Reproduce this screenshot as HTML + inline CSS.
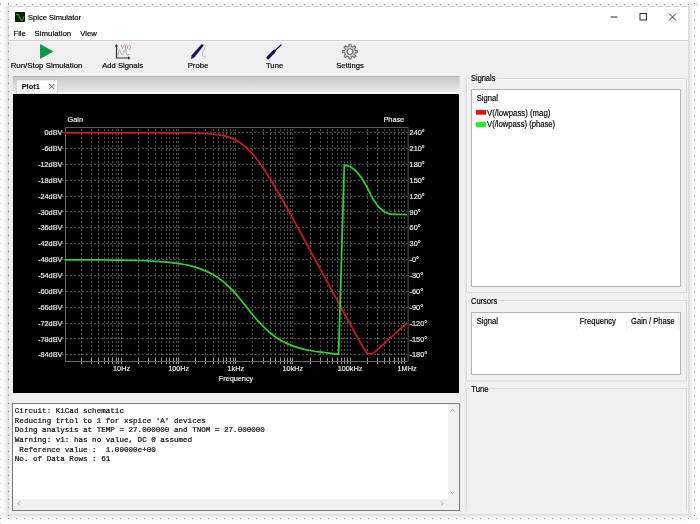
<!DOCTYPE html>
<html><head><meta charset="utf-8"><style>
html,body{margin:0;padding:0;width:700px;height:524px;overflow:hidden;background:#fff}
svg{display:block;will-change:transform}
text{font-family:"Liberation Sans",sans-serif;white-space:pre}
</style></head><body>
<svg width="700" height="524" viewBox="0 0 700 524">
<rect x="0" y="0" width="700" height="524" fill="#fff"/>
<rect x="1.5" y="1.0" width="694" height="520.5" rx="7" fill="#000" opacity="0.008"/>
<rect x="2.5" y="2.0" width="692" height="518.5" rx="6" fill="#000" opacity="0.01"/>
<rect x="3.5" y="3.0" width="690" height="516.5" rx="5" fill="#000" opacity="0.012"/>
<rect x="4.5" y="4.0" width="688" height="514.5" rx="4" fill="#000" opacity="0.015"/>
<rect x="5.5" y="5.0" width="686" height="512.5" rx="3" fill="#000" opacity="0.018"/>
<rect x="6.5" y="6.0" width="684" height="510.5" rx="2" fill="#000" opacity="0.022"/>
<rect x="7.5" y="7.0" width="682" height="508.5" rx="1" fill="#000" opacity="0.03"/>
<rect x="8" y="6" width="681" height="508" fill="#dcdcdc"/>
<rect x="9" y="7" width="679" height="507" fill="#f0f0f0"/>
<rect x="9" y="7" width="679" height="33" fill="#fff"/>
<rect x="9" y="40" width="679" height="1" fill="#cfcfcf"/>
<rect x="15" y="12" width="10" height="10" rx="1" fill="#082408"/>
<rect x="15.5" y="12.5" width="9" height="9" rx="1" fill="none" stroke="#041004" stroke-width="1"/>
<path d="M16.3 15.2 C17.6 12.8 19 15.5 20.3 18.5 S22.8 21.5 24 16.2" fill="none" stroke="#2c9c2c" stroke-width="1.1"/>
<text x="27.95" y="19.9" font-size="7.7" fill="#000" font-weight="normal" textLength="53.10" lengthAdjust="spacingAndGlyphs" stroke="#000" stroke-width="0.18">Spice Simulator</text>
<text x="13.55" y="35.9" font-size="8.0" fill="#000" font-weight="normal" textLength="12.20" lengthAdjust="spacingAndGlyphs" stroke="#000" stroke-width="0.18">File</text>
<text x="34.55" y="35.9" font-size="8.0" fill="#000" font-weight="normal" textLength="36.60" lengthAdjust="spacingAndGlyphs" stroke="#000" stroke-width="0.18">Simulation</text>
<text x="80.25" y="35.9" font-size="8.0" fill="#000" font-weight="normal" textLength="16.50" lengthAdjust="spacingAndGlyphs" stroke="#000" stroke-width="0.18">View</text>
<rect x="610.5" y="16.5" width="7" height="1" fill="#333"/>
<rect x="640" y="13.5" width="6.5" height="6.5" fill="none" stroke="#333" stroke-width="1"/>
<path d="M669 13.5 L676 20.5 M676 13.5 L669 20.5" stroke="#333" stroke-width="1" fill="none"/>
<rect x="9" y="41" width="679" height="1" fill="#fafafa"/>
<path d="M40 44 L53.5 51.5 L40 59 Z" fill="#0f9a48"/>
<text x="10.65" y="68.4" font-size="8.0" fill="#000" font-weight="normal" textLength="71.80" lengthAdjust="spacingAndGlyphs" stroke="#000" stroke-width="0.18">Run/Stop Simulation</text>
<path d="M116.5 45 V58 H129.5" fill="none" stroke="#333" stroke-width="1.2"/>
<path d="M114.8 46.5 L116.5 44 L118.2 46.5 Z M128 56.3 L130.5 58 L128 59.7 Z" fill="#333"/>
<path d="M118 55.5 C119 49 119.8 49 120.8 52.5 S122.6 56 123.6 52.5 S125.4 49 126.4 52.5 S128 56 128.6 54" fill="none" stroke="#8a8a8a" stroke-width="0.75"/>
<text x="120.2" y="49.3" font-size="5.8" fill="#e04a5a" textLength="10.6" lengthAdjust="spacingAndGlyphs" style="font-family:&quot;Liberation Serif&quot;,serif">V(t)</text>
<text x="102.25" y="68.4" font-size="8.0" fill="#000" font-weight="normal" textLength="40.80" lengthAdjust="spacingAndGlyphs" stroke="#000" stroke-width="0.18">Add Signals</text>
<path d="M202.5 45.5 C205.5 43.5 206 46 204 50 C202 54 201 56 206 57" fill="none" stroke="#9a9ab0" stroke-width="0.7"/>
<path d="M191.1 58.8 L191.9 55.3 L201.4 44.6 Q203 44 203.2 45.9 L194.3 57.3 Z" fill="#1a1060" stroke="#1a1060" stroke-width="0.4" stroke-linejoin="round"/>
<text x="187.65" y="68.4" font-size="8.0" fill="#000" font-weight="normal" textLength="20.70" lengthAdjust="spacingAndGlyphs" stroke="#000" stroke-width="0.18">Probe</text>
<path d="M281 45 L273.8 51.7" stroke="#1a1060" stroke-width="1.3" stroke-linecap="round" fill="none"/>
<path d="M274.2 51.3 L268 57.7" stroke="#1a1060" stroke-width="3.2" stroke-linecap="round" fill="none"/>
<text x="265.95" y="68.4" font-size="8.0" fill="#000" font-weight="normal" textLength="17.30" lengthAdjust="spacingAndGlyphs" stroke="#000" stroke-width="0.18">Tune</text>
<path d="M347.97 46.70 L348.75 46.45 L349.04 44.26 L350.96 44.26 L351.25 46.45 L352.03 46.70 L352.76 47.08 L354.51 45.74 L355.86 47.09 L354.52 48.84 L354.90 49.57 L355.15 50.35 L357.34 50.64 L357.34 52.56 L355.15 52.85 L354.90 53.63 L354.52 54.36 L355.86 56.11 L354.51 57.46 L352.76 56.12 L352.03 56.50 L351.25 56.75 L350.96 58.94 L349.04 58.94 L348.75 56.75 L347.97 56.50 L347.24 56.12 L345.49 57.46 L344.14 56.11 L345.48 54.36 L345.10 53.63 L344.85 52.85 L342.66 52.56 L342.66 50.64 L344.85 50.35 L345.10 49.57 L345.48 48.84 L344.14 47.09 L345.49 45.74 L347.24 47.08 Z" fill="#d6d6d6" stroke="#6b6b6b" stroke-width="1.1" stroke-linejoin="round"/>
<circle cx="350" cy="51.6" r="2.9" fill="#f4f4f4" stroke="#6b6b6b" stroke-width="1.1"/>
<text x="336.25" y="68.4" font-size="8.0" fill="#000" font-weight="normal" textLength="27.50" lengthAdjust="spacingAndGlyphs" stroke="#000" stroke-width="0.18">Settings</text>
<defs><linearGradient id="tabstrip" x1="0" y1="0" x2="0" y2="1"><stop offset="0" stop-color="#c6c6c6"/><stop offset="1" stop-color="#ececec"/></linearGradient><linearGradient id="tab" x1="0" y1="0" x2="0" y2="1"><stop offset="0" stop-color="#ffffff"/><stop offset="1" stop-color="#f4f4f4"/></linearGradient></defs>
<rect x="12.5" y="76" width="447" height="18" fill="url(#tabstrip)"/>
<rect x="12.5" y="76" width="447" height="1" fill="#b4b4b4"/>
<rect x="12.5" y="92" width="447" height="2" fill="#f6f6f6"/>
<rect x="16.5" y="80" width="41" height="14" fill="url(#tab)" stroke="#c4c4c4" stroke-width="0.6"/>
<text x="21.65" y="88.7" font-size="7.6" fill="#111" font-weight="bold" textLength="18.20" lengthAdjust="spacingAndGlyphs" stroke="#111" stroke-width="0.1">Plot1</text>
<path d="M49.3 84 L54.3 89 M54.3 84 L49.3 89" stroke="#444" stroke-width="0.9" fill="none"/>
<rect x="13" y="94" width="446" height="299" fill="#000"/>
<path d="M81.5 129 V361 M91.5 129 V361 M98.5 129 V361 M104.5 129 V361 M108.5 129 V361 M112.5 129 V361 M116.5 129 V361 M118.5 129 V361 M121.5 129 V361 M138.5 129 V361 M148.5 129 V361 M155.5 129 V361 M161.5 129 V361 M166.5 129 V361 M169.5 129 V361 M173.5 129 V361 M176.5 129 V361 M178.5 129 V361 M195.5 129 V361 M205.5 129 V361 M213.5 129 V361 M218.5 129 V361 M223.5 129 V361 M226.5 129 V361 M230.5 129 V361 M233.5 129 V361 M235.5 129 V361 M252.5 129 V361 M263.5 129 V361 M270.5 129 V361 M275.5 129 V361 M280.5 129 V361 M284.5 129 V361 M287.5 129 V361 M290.5 129 V361 M292.5 129 V361 M310.5 129 V361 M320.5 129 V361 M327.5 129 V361 M332.5 129 V361 M337.5 129 V361 M341.5 129 V361 M344.5 129 V361 M347.5 129 V361 M350.5 129 V361 M367.5 129 V361 M377.5 129 V361 M384.5 129 V361 M389.5 129 V361 M394.5 129 V361 M398.5 129 V361 M401.5 129 V361 M404.5 129 V361" stroke="#505050" stroke-width="1" stroke-dasharray="2 2" fill="none"/>
<path d="M62 132.5 H407.6 M62 148.5 H407.6 M62 164.5 H407.6 M62 180.5 H407.6 M62 196.5 H407.6 M62 211.5 H407.6 M62 227.5 H407.6 M62 243.5 H407.6 M62 259.5 H407.6 M62 275.5 H407.6 M62 291.5 H407.6 M62 307.5 H407.6 M62 323.5 H407.6 M62 338.5 H407.6 M62 354.5 H407.6" stroke="#4c4c4c" stroke-width="1" stroke-dasharray="2 2" fill="none"/>
<path d="M81.5 358 V364 M91.5 358 V364 M98.5 358 V364 M104.5 358 V364 M108.5 358 V364 M112.5 358 V364 M116.5 358 V364 M118.5 358 V364 M121.5 358 V364 M138.5 358 V364 M148.5 358 V364 M155.5 358 V364 M161.5 358 V364 M166.5 358 V364 M169.5 358 V364 M173.5 358 V364 M176.5 358 V364 M178.5 358 V364 M195.5 358 V364 M205.5 358 V364 M213.5 358 V364 M218.5 358 V364 M223.5 358 V364 M226.5 358 V364 M230.5 358 V364 M233.5 358 V364 M235.5 358 V364 M252.5 358 V364 M263.5 358 V364 M270.5 358 V364 M275.5 358 V364 M280.5 358 V364 M284.5 358 V364 M287.5 358 V364 M290.5 358 V364 M292.5 358 V364 M310.5 358 V364 M320.5 358 V364 M327.5 358 V364 M332.5 358 V364 M337.5 358 V364 M341.5 358 V364 M344.5 358 V364 M347.5 358 V364 M350.5 358 V364 M367.5 358 V364 M377.5 358 V364 M384.5 358 V364 M389.5 358 V364 M394.5 358 V364 M398.5 358 V364 M401.5 358 V364 M404.5 358 V364" stroke="#9a9a9a" stroke-width="1" fill="none"/>
<path d="M65.5 127 V361.5 H407.6" stroke="#6a6a6a" stroke-width="1" fill="none"/>
<path d="M65 127.5 H408.1 V361.5" stroke="#5a5a5a" stroke-width="1" fill="none"/>
<text x="62.4" y="135.2" font-size="7.3" fill="#e6e6e6" text-anchor="end" font-weight="normal" stroke="#e6e6e6" stroke-width="0.2" >0dBV</text>
<text x="409.6" y="135.1" font-size="7.3" fill="#e6e6e6" text-anchor="start" font-weight="normal" stroke="#e6e6e6" stroke-width="0.2" >240°</text>
<text x="62.4" y="151.1" font-size="7.3" fill="#e6e6e6" text-anchor="end" font-weight="normal" stroke="#e6e6e6" stroke-width="0.2" >-6dBV</text>
<text x="409.6" y="151.0" font-size="7.3" fill="#e6e6e6" text-anchor="start" font-weight="normal" stroke="#e6e6e6" stroke-width="0.2" >210°</text>
<text x="62.4" y="166.9" font-size="7.3" fill="#e6e6e6" text-anchor="end" font-weight="normal" stroke="#e6e6e6" stroke-width="0.2" >-12dBV</text>
<text x="409.6" y="166.8" font-size="7.3" fill="#e6e6e6" text-anchor="start" font-weight="normal" stroke="#e6e6e6" stroke-width="0.2" >180°</text>
<text x="62.4" y="182.8" font-size="7.3" fill="#e6e6e6" text-anchor="end" font-weight="normal" stroke="#e6e6e6" stroke-width="0.2" >-18dBV</text>
<text x="409.6" y="182.7" font-size="7.3" fill="#e6e6e6" text-anchor="start" font-weight="normal" stroke="#e6e6e6" stroke-width="0.2" >150°</text>
<text x="62.4" y="198.7" font-size="7.3" fill="#e6e6e6" text-anchor="end" font-weight="normal" stroke="#e6e6e6" stroke-width="0.2" >-24dBV</text>
<text x="409.6" y="198.6" font-size="7.3" fill="#e6e6e6" text-anchor="start" font-weight="normal" stroke="#e6e6e6" stroke-width="0.2" >120°</text>
<text x="62.4" y="214.6" font-size="7.3" fill="#e6e6e6" text-anchor="end" font-weight="normal" stroke="#e6e6e6" stroke-width="0.2" >-30dBV</text>
<text x="409.6" y="214.5" font-size="7.3" fill="#e6e6e6" text-anchor="start" font-weight="normal" stroke="#e6e6e6" stroke-width="0.2" >90°</text>
<text x="62.4" y="230.4" font-size="7.3" fill="#e6e6e6" text-anchor="end" font-weight="normal" stroke="#e6e6e6" stroke-width="0.2" >-36dBV</text>
<text x="409.6" y="230.3" font-size="7.3" fill="#e6e6e6" text-anchor="start" font-weight="normal" stroke="#e6e6e6" stroke-width="0.2" >60°</text>
<text x="62.4" y="246.3" font-size="7.3" fill="#e6e6e6" text-anchor="end" font-weight="normal" stroke="#e6e6e6" stroke-width="0.2" >-42dBV</text>
<text x="409.6" y="246.2" font-size="7.3" fill="#e6e6e6" text-anchor="start" font-weight="normal" stroke="#e6e6e6" stroke-width="0.2" >30°</text>
<text x="62.4" y="262.2" font-size="7.3" fill="#e6e6e6" text-anchor="end" font-weight="normal" stroke="#e6e6e6" stroke-width="0.2" >-48dBV</text>
<text x="409.6" y="262.1" font-size="7.3" fill="#e6e6e6" text-anchor="start" font-weight="normal" stroke="#e6e6e6" stroke-width="0.2" >-0°</text>
<text x="62.4" y="278.1" font-size="7.3" fill="#e6e6e6" text-anchor="end" font-weight="normal" stroke="#e6e6e6" stroke-width="0.2" >-54dBV</text>
<text x="409.6" y="278.0" font-size="7.3" fill="#e6e6e6" text-anchor="start" font-weight="normal" stroke="#e6e6e6" stroke-width="0.2" >-30°</text>
<text x="62.4" y="293.9" font-size="7.3" fill="#e6e6e6" text-anchor="end" font-weight="normal" stroke="#e6e6e6" stroke-width="0.2" >-60dBV</text>
<text x="409.6" y="293.9" font-size="7.3" fill="#e6e6e6" text-anchor="start" font-weight="normal" stroke="#e6e6e6" stroke-width="0.2" >-60°</text>
<text x="62.4" y="309.8" font-size="7.3" fill="#e6e6e6" text-anchor="end" font-weight="normal" stroke="#e6e6e6" stroke-width="0.2" >-66dBV</text>
<text x="409.6" y="309.7" font-size="7.3" fill="#e6e6e6" text-anchor="start" font-weight="normal" stroke="#e6e6e6" stroke-width="0.2" >-90°</text>
<text x="62.4" y="325.7" font-size="7.3" fill="#e6e6e6" text-anchor="end" font-weight="normal" stroke="#e6e6e6" stroke-width="0.2" >-72dBV</text>
<text x="409.6" y="325.6" font-size="7.3" fill="#e6e6e6" text-anchor="start" font-weight="normal" stroke="#e6e6e6" stroke-width="0.2" >-120°</text>
<text x="62.4" y="341.6" font-size="7.3" fill="#e6e6e6" text-anchor="end" font-weight="normal" stroke="#e6e6e6" stroke-width="0.2" >-78dBV</text>
<text x="409.6" y="341.5" font-size="7.3" fill="#e6e6e6" text-anchor="start" font-weight="normal" stroke="#e6e6e6" stroke-width="0.2" >-150°</text>
<text x="62.4" y="357.4" font-size="7.3" fill="#e6e6e6" text-anchor="end" font-weight="normal" stroke="#e6e6e6" stroke-width="0.2" >-84dBV</text>
<text x="409.6" y="357.4" font-size="7.3" fill="#e6e6e6" text-anchor="start" font-weight="normal" stroke="#e6e6e6" stroke-width="0.2" >-180°</text>
<text x="121.6" y="370.5" font-size="7.3" fill="#e6e6e6" text-anchor="middle" font-weight="normal" stroke="#e6e6e6" stroke-width="0.2" >10Hz</text>
<text x="178.7" y="370.5" font-size="7.3" fill="#e6e6e6" text-anchor="middle" font-weight="normal" stroke="#e6e6e6" stroke-width="0.2" >100Hz</text>
<text x="235.8" y="370.5" font-size="7.3" fill="#e6e6e6" text-anchor="middle" font-weight="normal" stroke="#e6e6e6" stroke-width="0.2" >1kHz</text>
<text x="292.9" y="370.5" font-size="7.3" fill="#e6e6e6" text-anchor="middle" font-weight="normal" stroke="#e6e6e6" stroke-width="0.2" >10kHz</text>
<text x="350.0" y="370.5" font-size="7.3" fill="#e6e6e6" text-anchor="middle" font-weight="normal" stroke="#e6e6e6" stroke-width="0.2" >100kHz</text>
<text x="407.1" y="370.5" font-size="7.3" fill="#e6e6e6" text-anchor="middle" font-weight="normal" stroke="#e6e6e6" stroke-width="0.2" >1MHz</text>
<text x="236" y="381.1" font-size="7.3" fill="#e6e6e6" text-anchor="middle" font-weight="normal" stroke="#e6e6e6" stroke-width="0.2" >Frequency</text>
<text x="67.6" y="122.4" font-size="7.3" fill="#e6e6e6" text-anchor="start" font-weight="normal" stroke="#e6e6e6" stroke-width="0.2" >Gain</text>
<text x="404.2" y="122.4" font-size="7.3" fill="#e6e6e6" text-anchor="end" font-weight="normal" stroke="#e6e6e6" stroke-width="0.2" >Phase</text>
<polyline points="64.5,132.8 70.2,132.8 75.9,132.8 81.6,132.8 87.3,132.8 93.0,132.8 98.8,132.8 104.5,132.8 110.2,132.8 115.9,132.8 121.6,132.8 127.3,132.8 133.0,132.8 138.7,132.8 144.4,132.8 150.2,132.8 155.9,132.8 161.6,132.8 167.3,132.8 173.0,132.9 178.7,132.9 184.4,132.9 190.1,133.0 195.8,133.1 201.5,133.3 207.2,133.6 213.0,134.1 218.7,134.8 224.4,135.9 230.1,137.6 235.8,140.1 241.5,143.6 247.2,148.3 252.9,154.3 258.6,161.5 264.4,169.7 270.1,178.7 275.8,188.2 281.5,198.1 287.2,208.3 292.9,218.6 298.6,229.0 304.3,239.5 310.0,250.0 315.7,260.5 321.4,271.1 327.2,281.6 332.9,292.2 338.6,302.8 344.3,313.5 350.0,323.7 355.7,334.1 361.4,344.5 367.1,353.7 372.8,353.7 378.6,348.6 384.3,343.5 390.0,338.4 395.7,333.2 401.4,328.1 407.1,323.0" fill="none" stroke="#c81a1a" stroke-width="1.75" stroke-linejoin="round"/>
<polyline points="64.5,259.8 70.2,259.8 75.9,259.9 81.6,259.9 87.3,259.9 93.0,259.9 98.8,259.9 104.5,260.0 110.2,260.0 115.9,260.1 121.6,260.2 127.3,260.3 133.0,260.4 138.7,260.5 144.4,260.7 150.2,261.0 155.9,261.3 161.6,261.7 167.3,262.2 173.0,262.8 178.7,263.6 184.4,264.5 190.1,265.7 195.8,267.3 201.5,269.2 207.2,271.6 213.0,274.5 218.7,278.1 224.4,282.6 230.1,287.8 235.8,293.9 241.5,300.7 247.2,307.9 252.9,315.0 258.6,321.7 264.4,327.7 270.1,332.8 275.8,337.2 281.5,340.7 287.2,343.6 292.9,345.9 298.6,347.8 304.3,349.3 310.0,350.5 315.7,351.5 321.4,352.2 327.2,352.9 332.9,353.6 338.6,354.4 344.3,165.0 350.0,166.5 355.7,170.7 361.4,177.6 367.1,187.3 372.8,198.8 378.6,207.0 384.3,211.7 390.0,214.2 395.7,214.4 401.4,214.5 407.1,214.5" fill="none" stroke="#2cd42c" stroke-width="1.75" stroke-linejoin="round"/>
<rect x="12.5" y="403.5" width="447" height="107" fill="#fff" stroke="#7c7c7c" stroke-width="1"/>
<rect x="448" y="404" width="11" height="106" fill="#f0f0f0"/>
<rect x="13" y="499" width="446" height="11" fill="#f0f0f0"/>
<path d="M450.5 411.5 L452.5 409.5 L454.5 411.5 M450.5 491.5 L452.5 493.5 L454.5 491.5 M20 501.5 L18 503.5 L20 505.5 M441 501.5 L443 503.5 L441 505.5" stroke="#9a9a9a" stroke-width="0.9" fill="none"/>
<text x="14.8" y="412.9" font-size="7.58" fill="#111" stroke="#111" stroke-width="0.22" style="font-family:&quot;Liberation Mono&quot;,monospace">Circuit:&#160;KiCad&#160;schematic</text>
<text x="14.8" y="422.6" font-size="7.58" fill="#111" stroke="#111" stroke-width="0.22" style="font-family:&quot;Liberation Mono&quot;,monospace">Reducing&#160;trtol&#160;to&#160;1&#160;for&#160;xspice&#160;&#39;A&#39;&#160;devices</text>
<text x="14.8" y="432.3" font-size="7.58" fill="#111" stroke="#111" stroke-width="0.22" style="font-family:&quot;Liberation Mono&quot;,monospace">Doing&#160;analysis&#160;at&#160;TEMP&#160;=&#160;27.000000&#160;and&#160;TNOM&#160;=&#160;27.000000</text>
<text x="14.8" y="442.0" font-size="7.58" fill="#111" stroke="#111" stroke-width="0.22" style="font-family:&quot;Liberation Mono&quot;,monospace">Warning:&#160;v1:&#160;has&#160;no&#160;value,&#160;DC&#160;0&#160;assumed</text>
<text x="14.8" y="451.7" font-size="7.58" fill="#111" stroke="#111" stroke-width="0.22" style="font-family:&quot;Liberation Mono&quot;,monospace">&#160;Reference&#160;value&#160;:&#160;&#160;1.00000e+00</text>
<text x="14.8" y="461.4" font-size="7.58" fill="#111" stroke="#111" stroke-width="0.22" style="font-family:&quot;Liberation Mono&quot;,monospace">No.&#160;of&#160;Data&#160;Rows&#160;:&#160;61</text>
<path d="M466.5 78.5 V292.5 H686.5 V78.5 H497" stroke="#dadada" stroke-width="1" fill="none"/>
<path d="M467.5 79.5 V291.5 M497 79.5 H685.5" stroke="#fbfbfb" stroke-width="1" fill="none"/>
<path d="M466.5 78.5 H469" stroke="#dadada" stroke-width="1" fill="none"/>
<text x="471.05" y="80.7" font-size="8.5" fill="#000" font-weight="normal" textLength="24.30" lengthAdjust="spacingAndGlyphs" stroke="#000" stroke-width="0.18">Signals</text>
<rect x="471.5" y="89.5" width="209" height="197" fill="#fff" stroke="#b4b4b4" stroke-width="1"/>
<text x="476.75" y="100.7" font-size="8.5" fill="#000" font-weight="normal" textLength="21.20" lengthAdjust="spacingAndGlyphs" stroke="#000" stroke-width="0.18">Signal</text>
<rect x="476" y="110" width="10" height="4.7" fill="#ee1111"/>
<rect x="476" y="122.2" width="10" height="5" fill="#22ee22"/>
<text x="487.05" y="115.7" font-size="8.5" fill="#000" font-weight="normal" textLength="63.30" lengthAdjust="spacingAndGlyphs" stroke="#000" stroke-width="0.18">V(/lowpass) (mag)</text>
<text x="487.05" y="127.0" font-size="8.5" fill="#000" font-weight="normal" textLength="68.10" lengthAdjust="spacingAndGlyphs" stroke="#000" stroke-width="0.18">V(/lowpass) (phase)</text>
<path d="M466.5 300.5 V381.0 H686.5 V300.5 H498" stroke="#dadada" stroke-width="1" fill="none"/>
<path d="M467.5 301.5 V380.0 M498 301.5 H685.5" stroke="#fbfbfb" stroke-width="1" fill="none"/>
<path d="M466.5 300.5 H469" stroke="#dadada" stroke-width="1" fill="none"/>
<text x="470.95" y="304.0" font-size="8.5" fill="#000" font-weight="normal" textLength="26.40" lengthAdjust="spacingAndGlyphs" stroke="#000" stroke-width="0.18">Cursors</text>
<rect x="471.5" y="312.5" width="209" height="62" fill="#fff" stroke="#b4b4b4" stroke-width="1"/>
<path d="M576.5 313 V330 M626.5 313 V330 M678.5 313 V330" stroke="#f0f0f0" stroke-width="1"/>
<text x="476.75" y="324.0" font-size="8.5" fill="#000" font-weight="normal" textLength="21.20" lengthAdjust="spacingAndGlyphs" stroke="#000" stroke-width="0.18">Signal</text>
<text x="579.65" y="324.0" font-size="8.5" fill="#000" font-weight="normal" textLength="36.30" lengthAdjust="spacingAndGlyphs" stroke="#000" stroke-width="0.18">Frequency</text>
<text x="631.05" y="324.0" font-size="8.5" fill="#000" font-weight="normal" textLength="43.70" lengthAdjust="spacingAndGlyphs" stroke="#000" stroke-width="0.18">Gain / Phase</text>
<path d="M466.5 511 V388.5 H469 M489 388.5 H686.5 V511" stroke="#dadada" stroke-width="1" fill="none"/>
<text x="471.25" y="391.7" font-size="8.5" fill="#000" font-weight="normal" textLength="17.30" lengthAdjust="spacingAndGlyphs" stroke="#000" stroke-width="0.18">Tune</text>
<path d="M460.5 76 V514 M465.5 76 V514" stroke="#e6e6e6" stroke-width="1"/>
<path d="M0 4.5h1 M0 518.5h1 M8 4.5h1 M8 518.5h1 M16 4.5h1 M16 518.5h1 M24 4.5h1 M24 518.5h1 M32 4.5h1 M32 518.5h1 M40 4.5h1 M40 518.5h1 M48 4.5h1 M48 518.5h1 M56 4.5h1 M56 518.5h1 M64 4.5h1 M64 518.5h1 M72 4.5h1 M72 518.5h1 M80 4.5h1 M80 518.5h1 M88 4.5h1 M88 518.5h1 M96 4.5h1 M96 518.5h1 M104 4.5h1 M104 518.5h1 M112 4.5h1 M112 518.5h1 M120 4.5h1 M120 518.5h1 M128 4.5h1 M128 518.5h1 M136 4.5h1 M136 518.5h1 M144 4.5h1 M144 518.5h1 M152 4.5h1 M152 518.5h1 M160 4.5h1 M160 518.5h1 M168 4.5h1 M168 518.5h1 M176 4.5h1 M176 518.5h1 M184 4.5h1 M184 518.5h1 M192 4.5h1 M192 518.5h1 M200 4.5h1 M200 518.5h1 M208 4.5h1 M208 518.5h1 M216 4.5h1 M216 518.5h1 M224 4.5h1 M224 518.5h1 M232 4.5h1 M232 518.5h1 M240 4.5h1 M240 518.5h1 M248 4.5h1 M248 518.5h1 M256 4.5h1 M256 518.5h1 M264 4.5h1 M264 518.5h1 M272 4.5h1 M272 518.5h1 M280 4.5h1 M280 518.5h1 M288 4.5h1 M288 518.5h1 M296 4.5h1 M296 518.5h1 M304 4.5h1 M304 518.5h1 M312 4.5h1 M312 518.5h1 M320 4.5h1 M320 518.5h1 M328 4.5h1 M328 518.5h1 M336 4.5h1 M336 518.5h1 M344 4.5h1 M344 518.5h1 M352 4.5h1 M352 518.5h1 M360 4.5h1 M360 518.5h1 M368 4.5h1 M368 518.5h1 M376 4.5h1 M376 518.5h1 M384 4.5h1 M384 518.5h1 M392 4.5h1 M392 518.5h1 M400 4.5h1 M400 518.5h1 M408 4.5h1 M408 518.5h1 M416 4.5h1 M416 518.5h1 M424 4.5h1 M424 518.5h1 M432 4.5h1 M432 518.5h1 M440 4.5h1 M440 518.5h1 M448 4.5h1 M448 518.5h1 M456 4.5h1 M456 518.5h1 M464 4.5h1 M464 518.5h1 M472 4.5h1 M472 518.5h1 M480 4.5h1 M480 518.5h1 M488 4.5h1 M488 518.5h1 M496 4.5h1 M496 518.5h1 M504 4.5h1 M504 518.5h1 M512 4.5h1 M512 518.5h1 M520 4.5h1 M520 518.5h1 M528 4.5h1 M528 518.5h1 M536 4.5h1 M536 518.5h1 M544 4.5h1 M544 518.5h1 M552 4.5h1 M552 518.5h1 M560 4.5h1 M560 518.5h1 M568 4.5h1 M568 518.5h1 M576 4.5h1 M576 518.5h1 M584 4.5h1 M584 518.5h1 M592 4.5h1 M592 518.5h1 M600 4.5h1 M600 518.5h1 M608 4.5h1 M608 518.5h1 M616 4.5h1 M616 518.5h1 M624 4.5h1 M624 518.5h1 M632 4.5h1 M632 518.5h1 M640 4.5h1 M640 518.5h1 M648 4.5h1 M648 518.5h1 M656 4.5h1 M656 518.5h1 M664 4.5h1 M664 518.5h1 M672 4.5h1 M672 518.5h1 M680 4.5h1 M680 518.5h1 M688 4.5h1 M688 518.5h1 M696 4.5h1 M696 518.5h1" stroke="#a0a0a0" stroke-width="1" fill="none"/>
<path d="M8 3.5h1 M694 3.5h1 M8 11.5h1 M694 11.5h1 M8 19.5h1 M694 19.5h1 M8 27.5h1 M694 27.5h1 M8 35.5h1 M694 35.5h1 M8 43.5h1 M694 43.5h1 M8 51.5h1 M694 51.5h1 M8 59.5h1 M694 59.5h1 M8 67.5h1 M694 67.5h1 M8 75.5h1 M694 75.5h1 M8 83.5h1 M694 83.5h1 M8 91.5h1 M694 91.5h1 M8 99.5h1 M694 99.5h1 M8 107.5h1 M694 107.5h1 M8 115.5h1 M694 115.5h1 M8 123.5h1 M694 123.5h1 M8 131.5h1 M694 131.5h1 M8 139.5h1 M694 139.5h1 M8 147.5h1 M694 147.5h1 M8 155.5h1 M694 155.5h1 M8 163.5h1 M694 163.5h1 M8 171.5h1 M694 171.5h1 M8 179.5h1 M694 179.5h1 M8 187.5h1 M694 187.5h1 M8 195.5h1 M694 195.5h1 M8 203.5h1 M694 203.5h1 M8 211.5h1 M694 211.5h1 M8 219.5h1 M694 219.5h1 M8 227.5h1 M694 227.5h1 M8 235.5h1 M694 235.5h1 M8 243.5h1 M694 243.5h1 M8 251.5h1 M694 251.5h1 M8 259.5h1 M694 259.5h1 M8 267.5h1 M694 267.5h1 M8 275.5h1 M694 275.5h1 M8 283.5h1 M694 283.5h1 M8 291.5h1 M694 291.5h1 M8 299.5h1 M694 299.5h1 M8 307.5h1 M694 307.5h1 M8 315.5h1 M694 315.5h1 M8 323.5h1 M694 323.5h1 M8 331.5h1 M694 331.5h1 M8 339.5h1 M694 339.5h1 M8 347.5h1 M694 347.5h1 M8 355.5h1 M694 355.5h1 M8 363.5h1 M694 363.5h1 M8 371.5h1 M694 371.5h1 M8 379.5h1 M694 379.5h1 M8 387.5h1 M694 387.5h1 M8 395.5h1 M694 395.5h1 M8 403.5h1 M694 403.5h1 M8 411.5h1 M694 411.5h1 M8 419.5h1 M694 419.5h1 M8 427.5h1 M694 427.5h1 M8 435.5h1 M694 435.5h1 M8 443.5h1 M694 443.5h1 M8 451.5h1 M694 451.5h1 M8 459.5h1 M694 459.5h1 M8 467.5h1 M694 467.5h1 M8 475.5h1 M694 475.5h1 M8 483.5h1 M694 483.5h1 M8 491.5h1 M694 491.5h1 M8 499.5h1 M694 499.5h1 M8 507.5h1 M694 507.5h1 M8 515.5h1 M694 515.5h1" stroke="#8c8c8c" stroke-width="1" fill="none"/>
<path d="M0 3.5h1 M0 11.5h1 M0 19.5h1 M0 27.5h1 M0 35.5h1 M0 43.5h1 M0 51.5h1 M0 59.5h1 M0 67.5h1 M0 75.5h1 M0 83.5h1 M0 91.5h1 M0 99.5h1 M0 107.5h1 M0 115.5h1 M0 123.5h1 M0 131.5h1 M0 139.5h1 M0 147.5h1 M0 155.5h1 M0 163.5h1 M0 171.5h1 M0 179.5h1 M0 187.5h1 M0 195.5h1 M0 203.5h1 M0 211.5h1 M0 219.5h1 M0 227.5h1 M0 235.5h1 M0 243.5h1 M0 251.5h1 M0 259.5h1 M0 267.5h1 M0 275.5h1 M0 283.5h1 M0 291.5h1 M0 299.5h1 M0 307.5h1 M0 315.5h1 M0 323.5h1 M0 331.5h1 M0 339.5h1 M0 347.5h1 M0 355.5h1 M0 363.5h1 M0 371.5h1 M0 379.5h1 M0 387.5h1 M0 395.5h1 M0 403.5h1 M0 411.5h1 M0 419.5h1 M0 427.5h1 M0 435.5h1 M0 443.5h1 M0 451.5h1 M0 459.5h1 M0 467.5h1 M0 475.5h1 M0 483.5h1 M0 491.5h1 M0 499.5h1 M0 507.5h1 M0 515.5h1 M0 523.5h1" stroke="#d0d0d0" stroke-width="1" fill="none"/>
</svg>
</body></html>
